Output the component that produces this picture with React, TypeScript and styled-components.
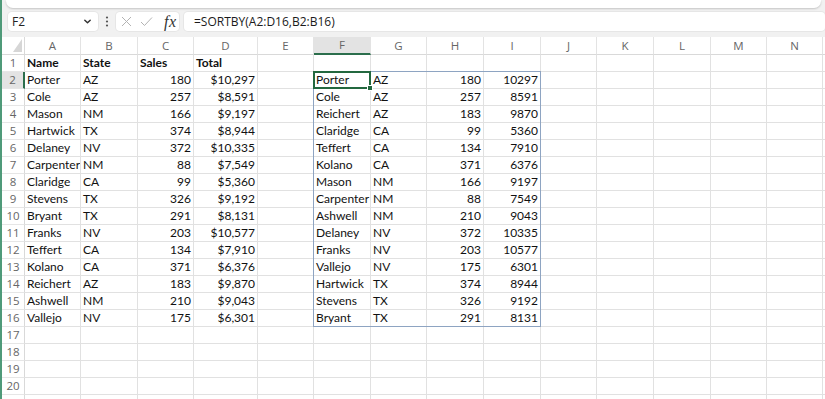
import React from "react";
import styled, { createGlobalStyle } from "styled-components";

const GlobalStyle = createGlobalStyle`
  html, body { margin: 0; padding: 0; background: #ffffff; overflow: hidden; }
  #root { height: 100vh; }
`;

const COLS = [23, 56, 57, 56, 64, 56, 57, 56, 57, 57, 56, 57, 57, 56, 56, 60];
const LETTERS = ["A", "B", "C", "D", "E", "F", "G", "H", "I", "J", "K", "L", "M", "N", ""];
const TEMPLATE = COLS.map((c) => `${c}px`).join(" ");

type Row = [string, string, string, string];
const LEFT: Row[] = [
  ["Porter", "AZ", "180", "$10,297"],
  ["Cole", "AZ", "257", "$8,591"],
  ["Mason", "NM", "166", "$9,197"],
  ["Hartwick", "TX", "374", "$8,944"],
  ["Delaney", "NV", "372", "$10,335"],
  ["Carpenter", "NM", "88", "$7,549"],
  ["Claridge", "CA", "99", "$5,360"],
  ["Stevens", "TX", "326", "$9,192"],
  ["Bryant", "TX", "291", "$8,131"],
  ["Franks", "NV", "203", "$10,577"],
  ["Teffert", "CA", "134", "$7,910"],
  ["Kolano", "CA", "371", "$6,376"],
  ["Reichert", "AZ", "183", "$9,870"],
  ["Ashwell", "NM", "210", "$9,043"],
  ["Vallejo", "NV", "175", "$6,301"],
];
const RIGHT: Row[] = [
  ["Porter", "AZ", "180", "10297"],
  ["Cole", "AZ", "257", "8591"],
  ["Reichert", "AZ", "183", "9870"],
  ["Claridge", "CA", "99", "5360"],
  ["Teffert", "CA", "134", "7910"],
  ["Kolano", "CA", "371", "6376"],
  ["Mason", "NM", "166", "9197"],
  ["Carpenter", "NM", "88", "7549"],
  ["Ashwell", "NM", "210", "9043"],
  ["Delaney", "NV", "372", "10335"],
  ["Franks", "NV", "203", "10577"],
  ["Vallejo", "NV", "175", "6301"],
  ["Hartwick", "TX", "374", "8944"],
  ["Stevens", "TX", "326", "9192"],
  ["Bryant", "TX", "291", "8131"],
];

const Window = styled.div`
  height: 100%;
  border-left: 2px solid #4f9a79;
  display: flex;
  flex-direction: column;
  overflow: hidden;
  background: #ffffff;
`;

const TopArea = styled.div`
  height: 37px;
  flex: none;
  background: #f1f1f1;
  display: flex;
  flex-direction: column;
`;

const RibbonEdge = styled.div`
  height: 8px;
  margin: 0 4px;
  background: #ffffff;
  border-radius: 0 0 7px 7px;
  box-shadow: 0 1px 2px rgba(0, 0, 0, 0.18);
`;

const FormulaRow = styled.div`
  display: flex;
  align-items: center;
  height: 19px;
  margin-top: 4px;
  padding-left: 6px;
`;

const Box = styled.div<{ $w?: number; $gap?: number }>`
  height: 19px;
  box-sizing: border-box;
  background: #ffffff;
  border-radius: 4px;
  box-shadow: 0 0 0 1px #e6e6e6;
  display: flex;
  align-items: center;
  margin-left: ${(p) => p.$gap ?? 0}px;
  ${(p) => (p.$w ? `width: ${p.$w}px; flex: none;` : "flex: 1;")}
`;

const NameText = styled.span`
  font-family: "Open Sans", "Liberation Sans", sans-serif;
  font-size: 12px;
  color: #222;
  padding-left: 4px;
  flex: 1;
`;

const Chevron = styled.svg`
  width: 9px;
  height: 9px;
  margin-right: 6px;
`;

const Dots = styled.svg`
  width: 4px;
  height: 11px;
  margin: 0 7px 0 7px;
  flex: none;
`;

const FnIcons = styled.div`
  display: flex;
  align-items: center;
  padding-left: 5px;
  gap: 8px;
`;

const Fx = styled.span`
  font-family: "Liberation Serif", serif;
  font-style: italic;
  font-size: 16px;
  color: #333;
  margin-left: 3px;
  letter-spacing: 0.5px;
`;

const FormulaText = styled.span`
  font-family: "Open Sans", "Liberation Sans", sans-serif;
  font-size: 12px;
  color: #1b1b1b;
  padding-left: 10px;
`;

const Sheet = styled.div`
  position: relative;
  flex: 1;
`;

const Grid = styled.div`
  display: grid;
  grid-template-columns: ${TEMPLATE};
  grid-template-rows: 18px;
  grid-auto-rows: 17px;
`;

const Overlay = styled.div`
  position: absolute;
  inset: 0;
  pointer-events: none;
  display: grid;
  grid-template-columns: ${TEMPLATE};
  grid-template-rows: 18px;
  grid-auto-rows: 17px;
`;

const Corner = styled.div`
  box-sizing: border-box;
  border-right: 1px solid #d9d9d9;
  border-bottom: 1px solid #d9d9d9;
  display: flex;
  align-items: flex-end;
  justify-content: flex-end;
  padding: 0 2px 2px 0;
`;

const ColHeader = styled.div<{ $sel?: boolean }>`
  box-sizing: border-box;
  border-right: 1px solid #e3e3e3;
  border-bottom: ${(p) => (p.$sel ? "2px solid #2b6e4c" : "1px solid #d9d9d9")};
  background: ${(p) => (p.$sel ? "#e3e3e3" : "#ffffff")};
  font-family: "Open Sans", "Liberation Sans", sans-serif;
  font-size: 11.5px;
  color: #666;
  text-align: center;
  line-height: ${(p) => (p.$sel ? "16px" : "17px")};
`;

const RowHeader = styled.div<{ $sel?: boolean }>`
  box-sizing: border-box;
  border-right: ${(p) => (p.$sel ? "2px solid #2b6e4c" : "1px solid #d9d9d9")};
  border-bottom: 1px solid #e6e6e6;
  background: ${(p) => (p.$sel ? "#e3e3e3" : "#ffffff")};
  font-family: "Open Sans", "Liberation Sans", sans-serif;
  font-size: 11.5px;
  color: #666;
  text-align: center;
  line-height: 16px;
`;

const Cell = styled.div<{ $right?: boolean; $bold?: boolean }>`
  box-sizing: border-box;
  border-right: 1px solid #e1e1e1;
  border-bottom: 1px solid #e1e1e1;
  font-family: Lato, "Liberation Sans", sans-serif;
  font-size: 12px;
  font-weight: ${(p) => (p.$bold ? 700 : 400)};
  color: #111;
  line-height: 16px;
  white-space: nowrap;
  overflow: hidden;
  text-align: ${(p) => (p.$right ? "right" : "left")};
  padding: ${(p) => (p.$right ? "0 2px 0 0" : "0 0 0 2px")};
`;

const SpillBorder = styled.div`
  grid-column: 7 / 11;
  grid-row: 3 / 18;
  margin: -1px 0 0 -1px;
  border: 1px solid #8ea4c2;
`;

const ActiveCell = styled.div`
  grid-column: 7 / 8;
  grid-row: 3 / 4;
  margin: -1px 0 0 -1px;
  border: 2px solid #23683f;
  position: relative;
`;

const FillHandle = styled.div`
  position: absolute;
  right: -4px;
  bottom: -4px;
  width: 4px;
  height: 4px;
  background: #23683f;
  border: 1px solid #ffffff;
`;

function cellsFor(row: number): React.ReactNode[] {
  const out: React.ReactNode[] = [];
  const push = (text: string, right = false, bold = false) =>
    out.push(
      <Cell key={`${row}-${out.length}`} $right={right} $bold={bold}>
        {text}
      </Cell>
    );
  if (row === 1) {
    ["Name", "State", "Sales", "Total"].forEach((t) => push(t, false, true));
  } else if (row >= 2 && row <= 16) {
    const l = LEFT[row - 2];
    push(l[0]);
    push(l[1]);
    push(l[2], true);
    push(l[3], true);
  } else {
    for (let i = 0; i < 4; i++) push("");
  }
  push(""); // E
  if (row >= 2 && row <= 16) {
    const r = RIGHT[row - 2];
    push(r[0]);
    push(r[1]);
    push(r[2], true);
    push(r[3], true);
  } else {
    for (let i = 0; i < 4; i++) push("");
  }
  for (let i = 0; i < 6; i++) push(""); // J..O
  return out;
}

export default function App() {
  const rows = Array.from({ length: 21 }, (_, i) => i + 1);
  return (
    <>
      <GlobalStyle />
      <Window>
        <TopArea>
          <RibbonEdge />
          <FormulaRow>
            <Box $w={90}>
              <NameText>F2</NameText>
              <Chevron viewBox="0 0 10 10">
                <path d="M2 3.5 L5 6.5 L8 3.5" fill="none" stroke="#333" strokeWidth="1.6" strokeLinecap="round" strokeLinejoin="round" />
              </Chevron>
            </Box>
            <Dots viewBox="0 0 4 11">
              <circle cx="2" cy="1.5" r="1.1" fill="#555" />
              <circle cx="2" cy="5.5" r="1.1" fill="#555" />
              <circle cx="2" cy="9.5" r="1.1" fill="#555" />
            </Dots>
            <Box $w={63}>
              <FnIcons>
                <svg width="11" height="11" viewBox="0 0 11 11">
                  <path d="M1 1 L10 10 M10 1 L1 10" stroke="#b3b3b3" strokeWidth="1" fill="none" />
                </svg>
                <svg width="13" height="11" viewBox="0 0 13 11">
                  <path d="M1 6 L4.5 9.5 L12 1.5" stroke="#b3b3b3" strokeWidth="1" fill="none" />
                </svg>
                <Fx>fx</Fx>
              </FnIcons>
            </Box>
            <Box $gap={5}>
              <FormulaText>=SORTBY(A2:D16,B2:B16)</FormulaText>
            </Box>
          </FormulaRow>
        </TopArea>
        <Sheet>
          <Grid>
            <Corner>
              <svg width="9" height="13" viewBox="0 0 9 13">
                <path d="M9 0 L9 13 L0 13 Z" fill="#d6d6d6" />
              </svg>
            </Corner>
            {LETTERS.map((l, i) => (
              <ColHeader key={i} $sel={l === "F"}>
                {l}
              </ColHeader>
            ))}
            {rows.map((r) => (
              <React.Fragment key={r}>
                <RowHeader $sel={r === 2}>{r <= 20 ? r : ""}</RowHeader>
                {cellsFor(r)}
              </React.Fragment>
            ))}
          </Grid>
          <Overlay>
            <SpillBorder />
            <ActiveCell>
              <FillHandle />
            </ActiveCell>
          </Overlay>
        </Sheet>
      </Window>
    </>
  );
}
